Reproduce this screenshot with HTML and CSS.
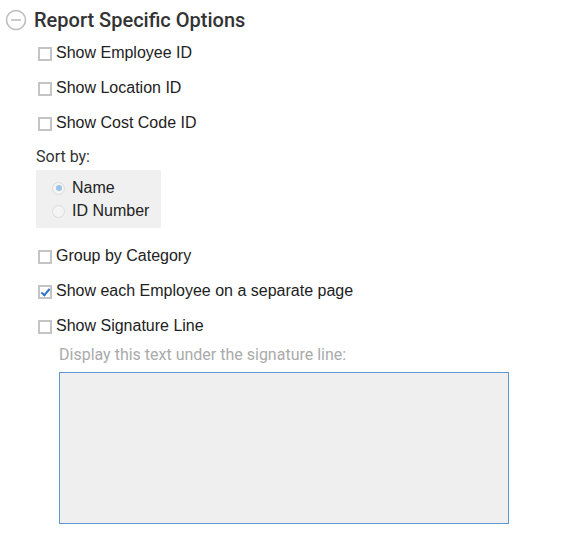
FILE: index.html
```html
<!DOCTYPE html>
<html lang="en">
<head>
    <meta charset="UTF-8">
    <meta name="viewport" content="width=device-width, initial-scale=1.0">
    <title>Report Options</title>
    <link rel="stylesheet" href="styles.css">
</head>
<body>

<div class="section">
    <div class="section-header">
        <svg class="toggle" width="22" height="22" viewBox="0 0 22 22">
            <circle cx="11" cy="11" r="9.5" fill="none" stroke="#bdbdbd" stroke-width="1.6"/>
            <line x1="6" y1="11" x2="16" y2="11" stroke="#bdbdbd" stroke-width="1.6"/>
        </svg>
        <h2>Report Specific Options</h2>
    </div>

    <div class="options">
        <label class="check-row"><input type="checkbox"> Show Employee ID</label>
        <label class="check-row"><input type="checkbox"> Show Location ID</label>
        <label class="check-row"><input type="checkbox"> Show Cost Code ID</label>

        <div class="sort-label">Sort by:</div>
        <div class="radio-group">
            <label class="radio-row"><input type="radio" name="sort" checked> Name</label>
            <label class="radio-row"><input type="radio" name="sort"> ID Number</label>
        </div>

        <label class="check-row first"><input type="checkbox"> Group by Category</label>
        <label class="check-row"><input type="checkbox" checked> Show each Employee on a separate page</label>
        <label class="check-row"><input type="checkbox"> Show Signature Line</label>

        <div class="signature">
            <div class="hint">Display this text under the signature line:</div>
            <textarea id="signatureText"></textarea>
        </div>
    </div>
</div>

</body>
</html>
```

FILE: styles.css
```css
body {
    margin: 0;
    font-family: "Liberation Sans", Arial, sans-serif;
    color: #222;
    background: #fff;
}
.section-header {
    display: flex;
    align-items: center;
    height: 40px;
    padding-left: 5px;
}
.toggle {
    margin-right: 7px;
}
.section-header h2 {
    margin: 0;
    font-family: Roboto, sans-serif;
    font-weight: 500;
    font-size: 20px;
    color: #333;
}
.options {
    padding-left: 36px;
    margin-top: -5px;
}
.check-row {
    display: flex;
    align-items: center;
    height: 35px;
    font-size: 16px;
    margin-left: 2px;
}
.check-row.first {
    margin-top: 10px;
}
.check-row input {
    appearance: none;
    box-sizing: border-box;
    width: 14px;
    height: 14px;
    margin: 3px 4px 0 0;
    border: 2px solid #c4c4c4;
    background: #fff;
    position: relative;
}
.check-row input:checked::after {
    content: "";
    position: absolute;
    left: 3px;
    top: 0;
    width: 3px;
    height: 7px;
    border: solid #2f72c6;
    border-width: 0 2px 2px 0;
    transform: rotate(40deg);
}
.sort-label {
    font-family: Roboto, sans-serif;
    font-size: 16px;
    color: #333;
    line-height: 20px;
    padding-top: 7px;
    margin-bottom: 3px;
}
.radio-group {
    display: inline-block;
    background: #f0f0f0;
    padding: 6px 12px 6px 16px;
}
.radio-row {
    display: flex;
    align-items: center;
    height: 23px;
    font-size: 16px;
}
.radio-row input {
    appearance: none;
    width: 13px;
    height: 13px;
    margin: 1px 7px 0 0;
    border: 1px solid #dcdcdc;
    border-radius: 50%;
    background: #f4f4f4;
    position: relative;
}
.radio-row input:checked::after {
    content: "";
    position: absolute;
    left: 2.5px;
    top: 2.5px;
    width: 6px;
    height: 6px;
    border-radius: 50%;
    background: #9cc3e6;
}
.signature {
    padding-left: 23px;
}
.hint {
    font-family: Roboto, sans-serif;
    font-size: 16px;
    color: #aaa;
    line-height: 20px;
    margin-top: 2px;
    margin-bottom: 7px;
}
textarea {
    display: block;
    box-sizing: border-box;
    width: 450px;
    height: 152px;
    margin: 0;
    border: 1px solid #5b9bd5;
    background: #efefef;
    resize: none;
    outline: none;
}
```
